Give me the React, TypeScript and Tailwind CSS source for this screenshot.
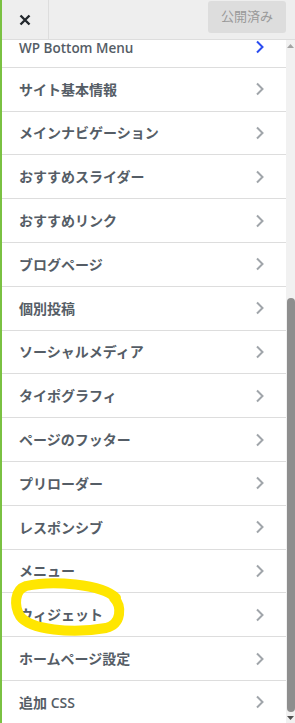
import React from 'react';

const items = [
  'サイト基本情報',
  'メインナビゲーション',
  'おすすめスライダー',
  'おすすめリンク',
  'ブログページ',
  '個別投稿',
  'ソーシャルメディア',
  'タイポグラフィ',
  'ページのフッター',
  'プリローダー',
  'レスポンシブ',
  'メニュー',
  'ウィジェット',
  'ホームページ設定',
  '追加 CSS',
];

const Chevron = ({ color }: { color: string }) => (
  <svg width="10" height="14" viewBox="0 0 10 14" fill="none">
    <path d="M2 1.5 L7.5 7 L2 12.5" stroke={color} strokeWidth="2" />
  </svg>
);

export default function App() {
  return (
    <div
      className="w-[295px] h-[723px] overflow-hidden flex flex-col bg-white border-l-2 border-[#7ac142] relative"
      style={{ fontFamily: '"Open Sans", "Noto Sans CJK JP", sans-serif' }}
    >
      {/* Header */}
      <div className="h-[40px] shrink-0 flex bg-[#eeeeee] border-b border-[#dddddd] z-10">
        <div className="w-[47px] flex items-center justify-center border-r border-[#dddddd]">
          <svg width="12" height="12" viewBox="0 0 12 12">
            <path d="M1.5 1.5 L10.5 10.5 M10.5 1.5 L1.5 10.5" stroke="#23282d" strokeWidth="2.4" />
          </svg>
        </div>
        <div className="flex-1 flex justify-end pr-[9px] pt-[1px]">
          <div className="w-[78px] h-[32px] rounded-[3px] bg-[#dddddd] text-[#999999] text-[13px] flex items-center justify-center">
            公開済み
          </div>
        </div>
      </div>

      {/* Body */}
      <div className="flex flex-1 min-h-0">
        <div className="flex-1 overflow-hidden">
          {/* first row, partly scrolled away */}
          <div className="h-[27.8px] flex items-start justify-between pl-[17px] pr-[21px] border-b border-[#dddddd] text-[13.5px] font-semibold text-[#555d66]">
            <span className="leading-[16px]">WP Bottom Menu</span>
            <Chevron color="#2a4cf0" />
          </div>
          {items.map((name) => (
            <div
              key={name}
              className="h-[43.8px] flex items-center justify-between pl-[17px] pr-[21px] border-b border-[#dddddd] text-[14px] font-semibold text-[#555d66]"
            >
              <span>{name}</span>
              <Chevron color="#a0a5aa" />
            </div>
          ))}
        </div>

        {/* Scrollbar */}
        <div className="w-[9px] shrink-0 bg-[#f1f1f1] flex flex-col items-center">
          <svg width="9" height="10" viewBox="0 0 9 10" className="mt-[1px]">
            <path d="M1 7 L4.5 3 L8 7 Z" fill="#a3a3a3" />
          </svg>
          <div className="mt-[247px] w-[8px] h-[416px] rounded-[4px] bg-[#8e8e8e]" />
          <svg width="9" height="10" viewBox="0 0 9 10" className="mt-[1px]">
            <path d="M1 3 L4.5 7 L8 3 Z" fill="#505050" />
          </svg>
        </div>
      </div>

      {/* Highlight marker */}
      <svg
        className="absolute left-0 top-0 pointer-events-none"
        width="295"
        height="723"
        viewBox="0 0 295 723"
      >
        <path
          d="M114 598 C 100 584, 50 580, 24 586 C 12 590, 12 606, 18 616 C 28 630, 70 634, 104 628 C 120 624, 120 606, 112 598"
          stroke="#ffe600"
          strokeWidth="10"
          fill="none"
          strokeLinecap="round"
        />
      </svg>
    </div>
  );
}
